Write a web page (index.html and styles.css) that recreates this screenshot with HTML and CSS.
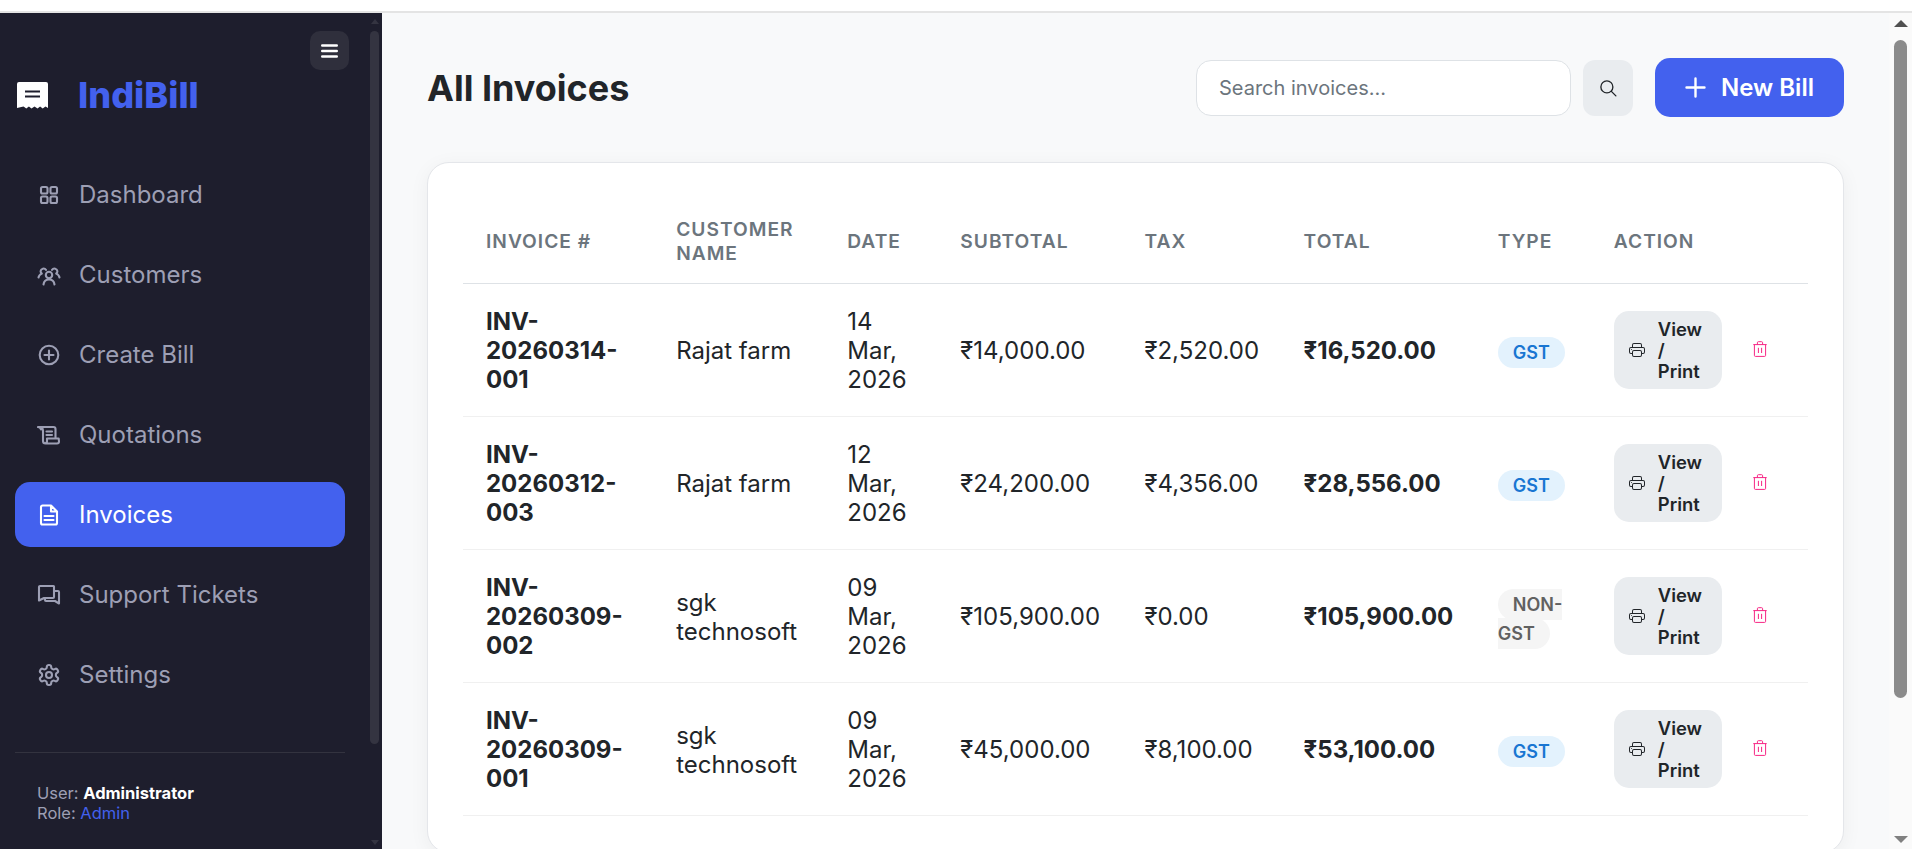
FILE: index.html
```html
<!DOCTYPE html>
<html lang="en">
<head>
<meta charset="utf-8">
<title>All Invoices - IndiBill</title>
<link rel="stylesheet" href="styles.css">
</head>
<body>
<svg class="defs" aria-hidden="true">
  <symbol id="i-print" viewBox="0 0 16 16"><path fill="currentColor" d="M2.5 8a.5.5 0 1 0 0-1 .5.5 0 0 0 0 1"/><path fill="currentColor" d="M5 1a2 2 0 0 0-2 2v2H2a2 2 0 0 0-2 2v3a2 2 0 0 0 2 2h1v1a2 2 0 0 0 2 2h6a2 2 0 0 0 2-2v-1h1a2 2 0 0 0 2-2V7a2 2 0 0 0-2-2h-1V3a2 2 0 0 0-2-2zM4 3a1 1 0 0 1 1-1h6a1 1 0 0 1 1 1v2H4zm1 5a2 2 0 0 0-2 2v1H2a1 1 0 0 1-1-1V7a1 1 0 0 1 1-1h12a1 1 0 0 1 1 1v3a1 1 0 0 1-1 1h-1v-1a2 2 0 0 0-2-2zm7 2v3a1 1 0 0 1-1 1H5a1 1 0 0 1-1-1v-3a1 1 0 0 1 1-1h6a1 1 0 0 1 1 1"/></symbol>
  <symbol id="i-trash" viewBox="0 0 14 16"><path fill="none" stroke="currentColor" stroke-width="1" d="M.3 3.6h13.4M4.400 3.600V1.700a1 1 0 0 1 1-1h3.200a1 1 0 0 1 1 1v1.900M1.400 3.600v10.800a1 1 0 0 0 1 1h9.200a1 1 0 0 0 1-1V3.600M5.400 6.800v5.200M8.600 6.800v5.200"/></symbol>
</svg>
<div class="topbar"></div>
<div class="shell">
  <aside class="sidebar">
    <div class="side-inner">
      <div class="toggle-row">
        <button class="toggle" aria-label="Toggle menu">
          <svg width="17" height="14" viewBox="0 0 17 14"><path fill="none" stroke="#fff" stroke-width="2.400" stroke-linecap="round" d="M1.200 1.500h14.600M1.200 7h14.600M1.200 12.500h14.600"/></svg>
        </button>
      </div>
      <div class="brand">
        <svg class="brand-icon" width="31" height="28" viewBox="0 0 31 28"><path fill="#fff" d="M2 1h27a2 2 0 0 1 2 2v24l-2.500-1.500-2.800 2-2.600-2-2.600 2-3-2-3 2-2.600-2-2.600 2-2.800-2L0 27V3a2 2 0 0 1 2-2z"/><path fill="none" stroke="#1e1e2d" stroke-width="2" d="M8 10.500h15M8 15.500h15"/></svg>
        <span class="brand-name">IndiBill</span>
      </div>
      <nav class="nav">
        <a class="nav-item">
          <svg class="nav-icon" viewBox="0 0 24 24"><rect x="4" y="4" width="6.500" height="6.500" rx="1.500"/><rect x="13.500" y="4" width="6.500" height="6.500" rx="1.500"/><rect x="4" y="13.500" width="6.500" height="6.500" rx="1.500"/><rect x="13.500" y="13.500" width="6.500" height="6.500" rx="1.500"/></svg>
          <span>Dashboard</span>
        </a>
        <a class="nav-item">
          <svg class="nav-icon" viewBox="0 0 24 24"><circle cx="12" cy="12" r="3.200"/><path d="M6.500 21.500c.4-3 2.600-5 5.500-5s5.100 2 5.500 5M9 6.800A3 3 0 0 0 3.600 8.200c0 1 .5 1.800 1.200 2.400-1.700.7-3 2-3.300 3.900M15 6.800a3 3 0 0 1 5.400 1.400c0 1-.5 1.800-1.200 2.400 1.700.7 3 2 3.300 3.900"/></svg>
          <span>Customers</span>
        </a>
        <a class="nav-item">
          <svg class="nav-icon" viewBox="0 0 24 24"><circle cx="12" cy="12" r="9.300"/><path d="M12 7.500v9M7.500 12h9"/></svg>
          <span>Create Bill</span>
        </a>
        <a class="nav-item">
          <svg class="nav-icon" viewBox="0 0 24 24"><path d="M1 4h15.500a2 2 0 0 1 2 2v9.500M1 4c1.600 0 2.600 1 3 2.500h0M4.300 4.200C5.500 5 6 6 6 7.500V18a2.500 2.500 0 0 0 2.500 2.500H20a2 2 0 0 0 2-2l-.3-3H10v2.800a2.200 2.200 0 0 1-2.200 2.200M9.500 8.500h5.500M9.500 12h5.500"/></svg>
          <span>Quotations</span>
        </a>
        <a class="nav-item is-active">
          <svg class="nav-icon" viewBox="0 0 24 24"><path d="M5.500 2.500H14l6 6V20a1.500 1.500 0 0 1-1.500 1.500h-13A1.500 1.500 0 0 1 4 20V4a1.500 1.500 0 0 1 1.500-1.500zM14 2.500V8.500h6M7.500 13h9M7.500 17h9"/></svg>
          <span>Invoices</span>
        </a>
        <a class="nav-item">
          <svg class="nav-icon" viewBox="0 0 24 24"><path d="M3 3h13.500a.5.500 0 0 1 .5.500V14a1 1 0 0 1-1 1H7l-5 2.500V4a1 1 0 0 1 1-1zM17 8h4a1 1 0 0 1 1 1v11.500L18 18H9a1 1 0 0 1-1-1v-2"/></svg>
          <span>Support Tickets</span>
        </a>
        <a class="nav-item">
          <svg class="nav-icon" viewBox="0 0 24 24"><path d="M12.220 2h-.44a2 2 0 0 0-2 2v.18a2 2 0 0 1-1 1.730l-.43.25a2 2 0 0 1-2 0l-.15-.08a2 2 0 0 0-2.730.73l-.22.38a2 2 0 0 0 .73 2.730l.15.1a2 2 0 0 1 1 1.720v.51a2 2 0 0 1-1 1.740l-.15.09a2 2 0 0 0-.73 2.730l.22.38a2 2 0 0 0 2.730.73l.15-.08a2 2 0 0 1 2 0l.43.25a2 2 0 0 1 1 1.730V20a2 2 0 0 0 2 2h.44a2 2 0 0 0 2-2v-.18a2 2 0 0 1 1-1.730l.43-.25a2 2 0 0 1 2 0l.15.08a2 2 0 0 0 2.730-.73l.22-.39a2 2 0 0 0-.73-2.730l-.15-.08a2 2 0 0 1-1-1.740v-.5a2 2 0 0 1 1-1.740l.15-.09a2 2 0 0 0 .73-2.730l-.22-.38a2 2 0 0 0-2.730-.73l-.15.08a2 2 0 0 1-2 0l-.43-.25a2 2 0 0 1-1-1.730V4a2 2 0 0 0-2-2z"/><circle cx="12" cy="12" r="3"/></svg>
          <span>Settings</span>
        </a>
      </nav>
      <div class="user-box">
        <div>User: <strong>Administrator</strong></div>
        <div>Role: <span class="role">Admin</span></div>
      </div>
    </div>
    <div class="side-scroll">
      <i class="tri-up side-up"></i>
      <div class="side-track"><div class="side-thumb"></div></div>
      <i class="tri-down side-down"></i>
    </div>
  </aside>
  <main class="main">
    <header class="page-head">
      <h1 class="title">All Invoices</h1>
      <div class="tools">
        <input class="search" type="text" placeholder="Search invoices...">
        <button class="search-btn" aria-label="Search">
          <svg width="18" height="18" viewBox="0 0 24 24" fill="none" stroke="#212529" stroke-width="1.800" stroke-linecap="round"><circle cx="10.500" cy="10.500" r="8"/><path d="M16.500 16.500l6 6"/></svg>
        </button>
        <button class="new-bill">
          <svg width="21" height="21" viewBox="0 0 21 21" fill="none" stroke="#fff" stroke-width="2.400" stroke-linecap="round"><path d="M10.500 1.500v18M1.500 10.500h18"/></svg>
          <span>New Bill</span>
        </button>
      </div>
    </header>
    <section class="card">
      <table class="invoices">
        <colgroup>
          <col class="c-inv"><col class="c-cust"><col class="c-date"><col class="c-sub"><col class="c-tax"><col class="c-total"><col class="c-type"><col class="c-act">
        </colgroup>
        <thead>
          <tr><th>Invoice #</th><th>Customer Name</th><th>Date</th><th>Subtotal</th><th>Tax</th><th>Total</th><th>Type</th><th>Action</th></tr>
        </thead>
        <tbody>
          <tr>
            <td class="strong">INV-20260314-001</td><td>Rajat farm</td><td>14 Mar, 2026</td><td>₹14,000.00</td><td>₹2,520.00</td><td class="strong">₹16,520.00</td>
            <td><span class="badge gst">GST</span></td>
            <td class="act"><div class="actions"><button class="view"><svg class="print" width="16" height="16"><use href="#i-print"/></svg><span class="view-label">View / Print</span></button><button class="del" aria-label="Delete"><svg width="14" height="16"><use href="#i-trash"/></svg></button></div></td>
          </tr>
          <tr>
            <td class="strong">INV-20260312-003</td><td>Rajat farm</td><td>12 Mar, 2026</td><td>₹24,200.00</td><td>₹4,356.00</td><td class="strong">₹28,556.00</td>
            <td><span class="badge gst">GST</span></td>
            <td class="act"><div class="actions"><button class="view"><svg class="print" width="16" height="16"><use href="#i-print"/></svg><span class="view-label">View / Print</span></button><button class="del" aria-label="Delete"><svg width="14" height="16"><use href="#i-trash"/></svg></button></div></td>
          </tr>
          <tr>
            <td class="strong">INV-20260309-002</td><td>sgk technosoft</td><td>09 Mar, 2026</td><td>₹105,900.00</td><td>₹0.00</td><td class="strong">₹105,900.00</td>
            <td><span class="badge non">NON-GST</span></td>
            <td class="act"><div class="actions"><button class="view"><svg class="print" width="16" height="16"><use href="#i-print"/></svg><span class="view-label">View / Print</span></button><button class="del" aria-label="Delete"><svg width="14" height="16"><use href="#i-trash"/></svg></button></div></td>
          </tr>
          <tr>
            <td class="strong">INV-20260309-001</td><td>sgk technosoft</td><td>09 Mar, 2026</td><td>₹45,000.00</td><td>₹8,100.00</td><td class="strong">₹53,100.00</td>
            <td><span class="badge gst">GST</span></td>
            <td class="act"><div class="actions"><button class="view"><svg class="print" width="16" height="16"><use href="#i-print"/></svg><span class="view-label">View / Print</span></button><button class="del" aria-label="Delete"><svg width="14" height="16"><use href="#i-trash"/></svg></button></div></td>
          </tr>
        </tbody>
      </table>
    </section>
  </main>
  <div class="page-scroll">
    <i class="tri-up page-up"></i>
    <div class="page-track"><div class="page-thumb"></div></div>
    <i class="tri-down page-down"></i>
  </div>
</div>
</body>
</html>
```

FILE: styles.css
```css
* { box-sizing: border-box; }
html, body { height: 100%; }
body {
  margin: 0;
  display: flex;
  flex-direction: column;
  overflow: hidden;
  font-family: Inter, "Noto Sans", sans-serif;
  color: #212529;
  background: #f8f9fa;
}
.defs { display: none; }
button { font-family: inherit; border: 0; cursor: pointer; }

.topbar { flex: none; height: 13px; background: #fff; border-bottom: 2px solid #e4e4e4; }
.shell { flex: 1; min-height: 0; display: flex; }

/* Drawn scrollbars */
.tri-up, .tri-down { display: block; width: 0; height: 0; border-style: solid; border-color: transparent; }

/* Sidebar */
.sidebar {
  flex: none;
  width: 382px;
  background: #1e1e2d;
  display: flex;
  overflow: hidden;
}
.side-inner { flex: none; width: 367px; padding: 18px 22px 0 15px; }
.side-scroll { flex: none; width: 15px; display: flex; flex-direction: column; align-items: center; padding: 6px 3px 4px; }
.side-up { border-width: 0 4.5px 5px; border-bottom-color: #343441; }
.side-down { border-width: 5px 4.5px 0; border-top-color: #343441; }
.side-track { flex: 1; width: 100%; padding: 7px 0 0; }
.side-thumb { width: 100%; height: 713px; background: #343441; border-radius: 5px; }

.toggle-row { display: flex; justify-content: flex-end; padding-right: 18px; margin-right: -22px; }
.toggle {
  width: 39px; height: 39px; padding: 0;
  background: #2f2f3c; border-radius: 10px;
  display: flex; align-items: center; justify-content: center;
}
.brand { display: flex; align-items: center; gap: 30px; margin: 3px 0 45px; padding-left: 2px; height: 44px; }
.brand-icon { flex: none; }
.brand-name { font-size: 36px; font-weight: 800; color: #4361ee; line-height: 44px; }

.nav { display: flex; flex-direction: column; gap: 15px; }
.nav-item {
  display: flex; align-items: center; gap: 18px;
  height: 65px; padding-left: 22px;
  border-radius: 15px;
  font-size: 24px; color: #9d9fb4;
}
.nav-icon { flex: none; width: 24px; height: 24px; fill: none; stroke: currentColor; stroke-width: 2.100; stroke-linecap: round; stroke-linejoin: round; }
.nav-item.is-active { background: #4361ee; color: #fff; }

.user-box {
  margin-top: 45px; padding: 30px 0 0 22px;
  border-top: 1px solid #33333f;
  font-size: 16.500px; line-height: 20px; color: #9d9fb4;
}
.user-box strong { color: #fff; font-weight: 700; }
.role { color: #4361ee; }

/* Main */
.main {
  flex: 1; min-width: 0;
  padding: 45px 45px 0;
  overflow: hidden;
}
.page-scroll { flex: none; width: 23px; background: #fafafa; display: flex; flex-direction: column; align-items: center; padding: 7px 5px 6px; }
.page-up { border-width: 0 7.5px 7px; border-bottom-color: #505050; }
.page-down { border-width: 7px 7.5px 0; border-top-color: #808080; }
.page-track { flex: 1; width: 100%; padding-top: 13px; }
.page-thumb { width: 100%; height: 658px; background: #8b8b8b; border-radius: 7px; }

.page-head { display: flex; align-items: center; justify-content: space-between; height: 59px; margin-bottom: 45px; }
.title { margin: 0; font-size: 36px; font-weight: 700; color: #212529; }
.tools { display: flex; align-items: center; }
.search {
  width: 375px; height: 56px; padding: 0 22px;
  background: #fff; border: 1px solid #dee2e6; border-radius: 15px;
  font-family: inherit; font-size: 20px; color: #212529; outline: none;
}
.search::placeholder { color: #6c757d; opacity: 1; }
.search-btn {
  width: 50px; height: 56px; margin: 0 22px 0 12px; padding: 0;
  background: #e9ecef; border-radius: 12px;
  display: flex; align-items: center; justify-content: center;
}
.new-bill {
  width: 189px; height: 59px; padding: 0;
  background: #4361ee; color: #fff; border-radius: 15px;
  display: flex; align-items: center; justify-content: center; gap: 15px;
  font-size: 24px; font-weight: 600;
}

.card {
  background: #fff;
  border: 1px solid #e4e6ea;
  border-radius: 22px;
  padding: 36px 35px;
  box-shadow: 0 4px 20px rgba(0, 0, 0, 0.05);
}
.invoices { width: 100%; table-layout: fixed; border-collapse: collapse; font-size: 24px; }
.c-inv { width: 190px; } .c-cust { width: 171px; } .c-date { width: 113px; } .c-sub { width: 184px; }
.c-tax { width: 159px; } .c-total { width: 194px; } .c-type { width: 116px; } .c-act { width: 217px; }
.invoices th {
  height: 84px; padding: 19px 23px 17px;
  text-align: left; vertical-align: middle;
  font-size: 19.200px; line-height: 23.500px; font-weight: 600; letter-spacing: 1px; text-transform: uppercase;
  color: #6c757d;
  border-bottom: 1px solid #dee2e6;
}
.invoices td {
  height: 133px; padding: 23px 23px 21px;
  vertical-align: middle; line-height: 29px;
  border-bottom: 1px solid #f0f0f0;
}
.invoices td.strong { font-weight: 700; }
.invoices td.act { padding: 22px 23px; }

.badge {
  padding: 5px 15px; border-radius: 22px;
  font-size: 18px; font-weight: 600; line-height: 22px;
}
.gst { background: #e3f2fd; color: #1976d2; }
.non { background: #f5f5f5; color: #616161; }

.actions { display: flex; align-items: center; gap: 31px; }
.view {
  flex: none; width: 108px; height: 78px; padding: 7px 15px;
  background: #e9ecef; color: #212529; border-radius: 15px;
  display: flex; align-items: center; gap: 13px;
  font-size: 18.400px; font-weight: 600; line-height: 21px; text-align: left;
}
.print { flex: none; }
.view-label { padding-top: 2px; }
.del { background: none; padding: 0; color: #f72585; display: flex; margin-bottom: 2px; }
```
